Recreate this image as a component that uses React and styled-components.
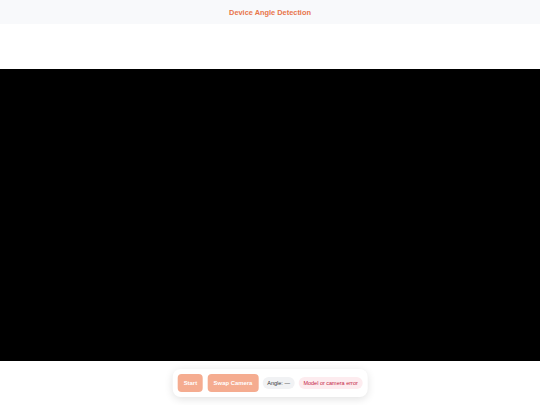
import styled, { createGlobalStyle } from 'styled-components'

const GlobalStyle = createGlobalStyle`
  * { box-sizing: border-box; }
  html, body {
    margin: 0;
    padding: 0;
    height: 100%;
    background: #ffffff;
    font-family: "Liberation Sans", Arial, sans-serif;
  }
  #root { height: 100%; }
`

const App = () => {
  return (
    <Page>
      <GlobalStyle />
      <Header>
        <Title>Device Angle Detection</Title>
      </Header>
      <Stage>
        <Video />
        <Controls>
          <Button disabled>Start</Button>
          <Button disabled>Swap Camera</Button>
          <Pill>Angle: —</Pill>
          <Pill $error>Model or camera error</Pill>
        </Controls>
      </Stage>
    </Page>
  )
}

const Page = styled.div`
  display: flex;
  flex-direction: column;
  height: 100vh;
  width: 100%;
  overflow: hidden;
`

const Header = styled.header`
  height: 24px;
  flex-shrink: 0;
  background: #f8f9fb;
  display: flex;
  align-items: center;
  justify-content: center;
`

const Title = styled.h1`
  margin: 0;
  font-size: 7.4px;
  font-weight: 700;
  color: #e8754a;
`

const Stage = styled.main`
  position: relative;
  flex: 1;
  display: flex;
  align-items: center;
  justify-content: center;
`

const Video = styled.div`
  width: 100%;
  height: 292px;
  background: #000000;
`

const Controls = styled.div`
  position: absolute;
  bottom: 8px;
  left: 50%;
  transform: translateX(-50%);
  display: flex;
  align-items: center;
  gap: 4.5px;
  padding: 5px;
  background: #ffffff;
  border-radius: 8px;
  box-shadow: 0 2px 8px rgba(0, 0, 0, 0.12);
  white-space: nowrap;
`

const Button = styled.button`
  border: none;
  border-radius: 4px;
  background: #f5ac90;
  color: #ffffff;
  font-family: inherit;
  font-size: 5.9px;
  font-weight: 700;
  height: 18px;
  padding: 0 6px;
`

const Pill = styled.span`
  display: inline-flex;
  align-items: center;
  height: 12px;
  padding: 0 4.5px;
  border-radius: 6px;
  font-size: 5.5px;
  background: ${(p) => (p.$error ? '#fdecef' : '#f1f2f4')};
  color: ${(p) => (p.$error ? '#c42545' : '#333333')};
`

export default App
